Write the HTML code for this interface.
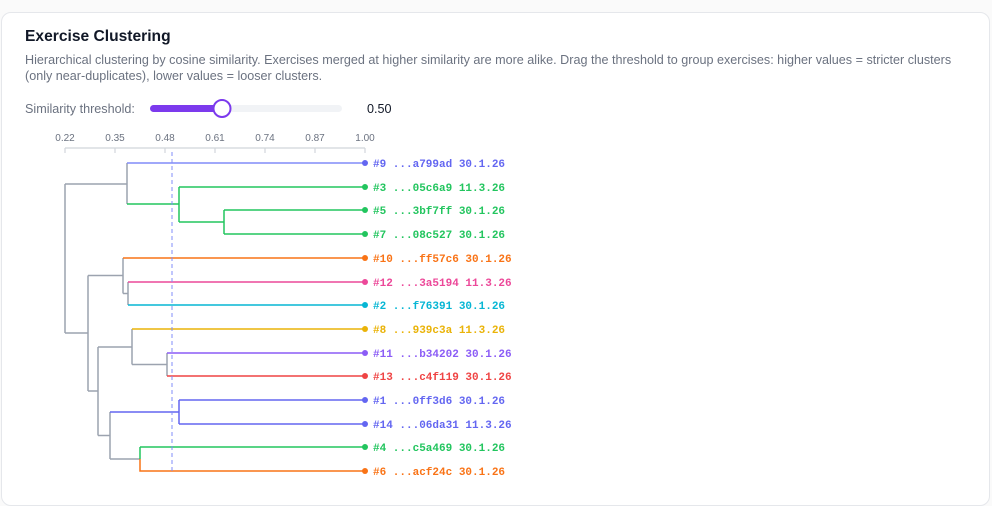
<!DOCTYPE html>
<html><head><style>
body{margin:0;background:#fafafa;width:992px;height:506px;overflow:hidden;font-family:"Liberation Sans",sans-serif}
.card{position:absolute;left:1px;top:12px;width:987px;height:492px;background:#fff;border:1px solid #e5e7eb;border-radius:10px}
h1{position:absolute;left:25px;top:28px;margin:0;font-size:15.6px;font-weight:bold;color:#111827}
.d{position:absolute;left:25px;top:53px;width:950px;font-size:12.6px;line-height:15.5px;color:#6b7280}
.l{position:absolute;left:25px;top:102px;font-size:12.6px;color:#6b7280}
.v{position:absolute;left:367px;top:102px;font-size:12.6px;color:#111827}
</style></head><body>
<div class="card"></div>
<h1>Exercise Clustering</h1>
<div class="d">Hierarchical clustering by cosine similarity. Exercises merged at higher similarity are more alike. Drag the threshold to group exercises: higher values = stricter clusters (only near&#8209;duplicates), lower values = looser clusters.</div>
<div class="l">Similarity threshold:</div>
<div class="v">0.50</div>
<svg width="992" height="506" style="position:absolute;left:0;top:0">
<rect x="150" y="105" width="192" height="7" rx="3.5" fill="#f1f3f6"/>
<rect x="150" y="105" width="72" height="7" rx="3.5" fill="#7c3aed"/>
<circle cx="222" cy="108.5" r="8.5" fill="#fff" stroke="#7c3aed" stroke-width="2"/>
<g font-family="Liberation Sans,sans-serif" font-size="10" fill="#6b7280" text-anchor="middle">
<text x="65" y="141">0.22</text><text x="115" y="141">0.35</text><text x="165" y="141">0.48</text><text x="215" y="141">0.61</text><text x="265" y="141">0.74</text><text x="315" y="141">0.87</text><text x="365" y="141">1.00</text></g>
<g stroke="#d1d5db" stroke-width="1.2"><line x1="65" y1="148" x2="365" y2="148"/>
<line x1="65" y1="148" x2="65" y2="153"/><line x1="115" y1="148" x2="115" y2="153"/><line x1="165" y1="148" x2="165" y2="153"/><line x1="215" y1="148" x2="215" y2="153"/><line x1="265" y1="148" x2="265" y2="153"/><line x1="315" y1="148" x2="315" y2="153"/><line x1="365" y1="148" x2="365" y2="153"/></g>
<g fill="none" stroke-width="1.5">
<path stroke="#9ca3af" d="M65 184H127M127 163V204M123 258V293.5M88 275.5H123M132 329V364.5M98 347H132M110 412V459M98 435.5H110M98 347V435.5M88 391H98M88 275.5V391M65 333H88M65 184V333"/>
<path stroke="#818cf8" d="M127 163H365"/>
<path stroke="#22c55e" d="M127 204H179M179 187V222M179 187H365M179 222H224M224 210V234M224 210H365M224 234H365"/>
<path stroke="#f97316" d="M123 258H365"/>
<path stroke="#9ca3af" d="M123 293.5H128M128 282V305"/>
<path stroke="#ec4899" d="M128 282H365"/>
<path stroke="#06b6d4" d="M128 305H365"/>
<path stroke="#eab308" d="M132 329H365"/>
<path stroke="#9ca3af" d="M132 364.5H167M167 353V376"/>
<path stroke="#8b5cf6" d="M167 353H365"/>
<path stroke="#ef4444" d="M167 376H365"/>
<path stroke="#6366f1" d="M110 412H179M179 400V424M179 400H365M179 424H365"/>
<path stroke="#9ca3af" d="M110 459H140"/>
<path stroke="#22c55e" d="M140 459V447M140 447H365"/>
<path stroke="#f97316" d="M140 459V471H365"/>
</g>
<line x1="172" y1="152" x2="172" y2="472" stroke="#818cf8" stroke-width="1" stroke-dasharray="4,3"/>
<g font-family="Liberation Mono,monospace" font-size="11" font-weight="bold">
<g fill="#6366f1"><circle cx="365" cy="163" r="3"/><text x="373" y="167">#9 ...a799ad 30.1.26</text></g>
<g fill="#22c55e"><circle cx="365" cy="187" r="3"/><text x="373" y="191">#3 ...05c6a9 11.3.26</text>
<circle cx="365" cy="210" r="3"/><text x="373" y="214">#5 ...3bf7ff 30.1.26</text>
<circle cx="365" cy="234" r="3"/><text x="373" y="238">#7 ...08c527 30.1.26</text></g>
<g fill="#f97316"><circle cx="365" cy="258" r="3"/><text x="373" y="262">#10 ...ff57c6 30.1.26</text></g>
<g fill="#ec4899"><circle cx="365" cy="282" r="3"/><text x="373" y="286">#12 ...3a5194 11.3.26</text></g>
<g fill="#06b6d4"><circle cx="365" cy="305" r="3"/><text x="373" y="309">#2 ...f76391 30.1.26</text></g>
<g fill="#eab308"><circle cx="365" cy="329" r="3"/><text x="373" y="333">#8 ...939c3a 11.3.26</text></g>
<g fill="#8b5cf6"><circle cx="365" cy="353" r="3"/><text x="373" y="357">#11 ...b34202 30.1.26</text></g>
<g fill="#ef4444"><circle cx="365" cy="376" r="3"/><text x="373" y="380">#13 ...c4f119 30.1.26</text></g>
<g fill="#6366f1"><circle cx="365" cy="400" r="3"/><text x="373" y="404">#1 ...0ff3d6 30.1.26</text>
<circle cx="365" cy="424" r="3"/><text x="373" y="428">#14 ...06da31 11.3.26</text></g>
<g fill="#22c55e"><circle cx="365" cy="447" r="3"/><text x="373" y="451">#4 ...c5a469 30.1.26</text></g>
<g fill="#f97316"><circle cx="365" cy="471" r="3"/><text x="373" y="475">#6 ...acf24c 30.1.26</text></g>
</g>
</svg>
</body></html>
